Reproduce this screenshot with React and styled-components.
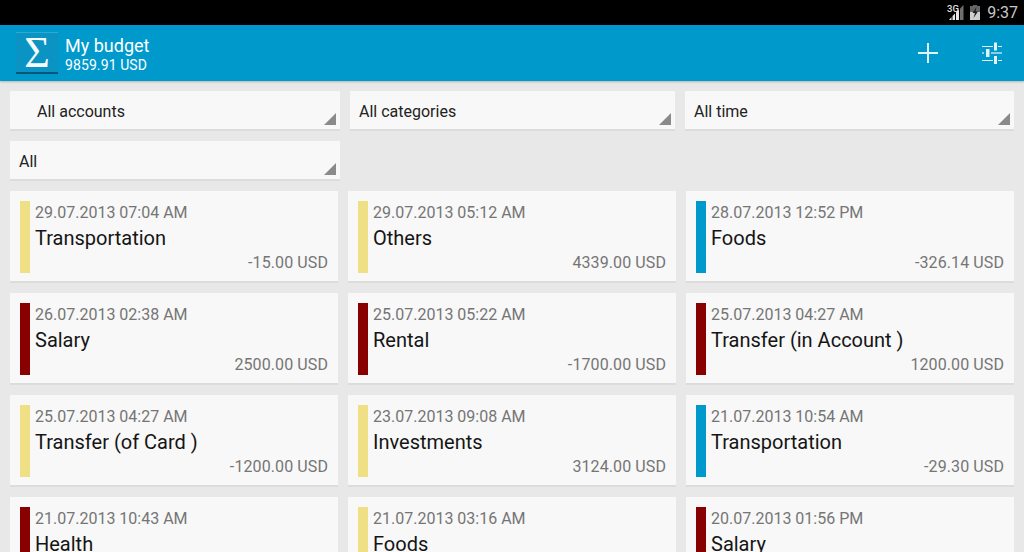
import React from "react"
import styled, { createGlobalStyle } from "styled-components"

const GlobalStyle = createGlobalStyle`
  html, body {
    margin: 0;
    padding: 0;
    background: #e8e8e8;
  }
  body {
    font-family: Roboto, "Liberation Sans", sans-serif;
  }
`

const Root = styled.div`
  width: 1024px;
  height: 552px;
  overflow: hidden;
  background: #e8e8e8;
`

const StatusBar = styled.div`
  height: 25px;
  background: #000;
  display: flex;
  align-items: center;
  justify-content: flex-end;
  padding-right: 6px;
  box-sizing: border-box;
`

const Clock = styled.span`
  color: #c8c8c8;
  font-size: 16px;
  margin-left: 7px;
  line-height: 25px;
`

const StatusIcon = styled.svg`
  display: block;
  margin-left: ${(p) => p.$gap || 0}px;
`

const Toolbar = styled.header`
  height: 56px;
  background: #0099cc;
  box-shadow: 0 1px 2px rgba(0, 0, 0, 0.22);
  display: flex;
  align-items: center;
  padding-left: 16px;
  box-sizing: border-box;
  color: #fff;
`

const Logo = styled.div`
  width: 42px;
  height: 42px;
  box-sizing: border-box;
  border-top: 1px solid #2fa9d3;
  border-bottom: 2px solid #05577a;
  background: #0b93c4;
  display: flex;
  align-items: center;
  justify-content: center;
  font-family: "Liberation Serif", serif;
  font-size: 44px;
  line-height: 36px;
  color: #f4fbfd;
`

const TitleBlock = styled.div`
  margin-left: 7px;
  padding-top: 2px;
  flex: 1;
  display: flex;
  flex-direction: column;
`

const AppTitle = styled.div`
  font-size: 18px;
  line-height: 22px;
`

const AppSubtitle = styled.div`
  font-size: 14px;
  line-height: 16px;
  letter-spacing: 0.1px;
`

const ActionButton = styled.button`
  width: 64px;
  height: 56px;
  border: 0;
  padding: 0;
  background: none;
  display: flex;
  align-items: center;
  justify-content: center;
`

const Filters = styled.div`
  display: grid;
  grid-template-columns: 330px 325px 329px;
  column-gap: 10px;
  row-gap: 10px;
  padding: 10px 10px;
`

const Spinner = styled.div`
  position: relative;
  height: 40px;
  box-sizing: border-box;
  background: #f8f8f8;
  border-bottom: 2px solid #dcdcdc;
  color: #222;
  font-size: 16px;
  line-height: 42px;
  padding-left: ${(p) => p.$indent}px;
`

const Arrow = styled.span`
  position: absolute;
  right: 4px;
  bottom: 4px;
  width: 12px;
  height: 12px;
  background: #8a8a8a;
  clip-path: polygon(100% 0, 100% 100%, 0 100%);
`

const Cards = styled.div`
  display: grid;
  grid-template-columns: repeat(3, 328px);
  column-gap: 10px;
  row-gap: 10px;
  padding: 0 10px;
`

const Card = styled.div`
  height: 92px;
  box-sizing: border-box;
  background: #f8f8f8;
  border-bottom: 2px solid #dcdcdc;
  padding: 10px 10px 8px 10px;
  display: flex;
`

const ColorBar = styled.div`
  width: 10px;
  height: 72px;
  flex: none;
  background: ${(p) => p.$color};
`

const CardBody = styled.div`
  flex: 1;
  margin-left: 5px;
  display: flex;
  flex-direction: column;
`

const CardDate = styled.div`
  font-size: 16px;
  line-height: 24px;
  color: #757575;
`

const CardTitle = styled.div`
  font-size: 20px;
  line-height: 26px;
  color: #151515;
`

const CardAmount = styled.div`
  font-size: 16px;
  line-height: 22px;
  margin-top: 1px;
  letter-spacing: 0.1px;
  text-align: right;
  color: #757575;
`

const YELLOW = "#f0e085"
const BLUE = "#0099cc"
const RED = "#880000"

const filters = [
  { label: "All accounts", indent: 27 },
  { label: "All categories", indent: 9 },
  { label: "All time", indent: 9 },
  { label: "All", indent: 9 },
]

const entries = [
  ["29.07.2013 07:04 AM", "Transportation", "-15.00 USD", YELLOW],
  ["29.07.2013 05:12 AM", "Others", "4339.00 USD", YELLOW],
  ["28.07.2013 12:52 PM", "Foods", "-326.14 USD", BLUE],
  ["26.07.2013 02:38 AM", "Salary", "2500.00 USD", RED],
  ["25.07.2013 05:22 AM", "Rental", "-1700.00 USD", RED],
  ["25.07.2013 04:27 AM", "Transfer (in Account )", "1200.00 USD", RED],
  ["25.07.2013 04:27 AM", "Transfer (of Card )", "-1200.00 USD", YELLOW],
  ["23.07.2013 09:08 AM", "Investments", "3124.00 USD", YELLOW],
  ["21.07.2013 10:54 AM", "Transportation", "-29.30 USD", BLUE],
  ["21.07.2013 10:43 AM", "Health", "-80.00 USD", RED],
  ["21.07.2013 03:16 AM", "Foods", "-54.20 USD", YELLOW],
  ["20.07.2013 01:56 PM", "Salary", "2500.00 USD", RED],
]

const SignalIcon = () => (
  <StatusIcon width="17" height="17" viewBox="0 0 17 17">
    <text x="0" y="8" fontSize="9.500" fontWeight="500" fill="#e0e0e0" fontFamily="Roboto, sans-serif">3G</text>
    <path d="M2 16h2.500v-3zM5.500 16H8v-6.500L5.500 12zM9 16h3V5.500L9 8.500z" fill="#e8e8e8" />
    <path d="M13 16h3.500V1L13 4.500z" fill="#6e6e6e" />
  </StatusIcon>
)

const BatteryIcon = () => (
  <StatusIcon $gap={6} width="10" height="15" viewBox="0 0 10 15">
    <path d="M3 0h4v1h3v14H0V1h3z" fill="#d0d0d0" />
    <path d="M0 1h10v6H0zM3 0h4v1H3z" fill="#666" />
    <path d="M6.500 2 2.500 8H5l-1.500 5L8 6.500H5.500z" fill="#1c1c1c" />
  </StatusIcon>
)

const PlusIcon = () => (
  <svg width="20" height="20" viewBox="0 0 20 20">
    <path d="M9 0h2v9h9v2h-9v9H9v-9H0V9h9z" fill="#e4f3f9" />
  </svg>
)

const SlidersIcon = () => (
  <svg width="20" height="22" viewBox="0 0 20 22" fill="#e4f3f9">
    <path d="M0 4h11v1H0zM16 4h4v1h-4zM0 18h11v1H0zM16 18h4v1h-4z" />
    <path d="M0 10h2v2H0zM9 10h11v2H9z" opacity="0.6" />
    <rect x="12" y="0.500" width="3" height="8" />
    <rect x="4" y="7" width="3.500" height="8" />
    <rect x="12" y="14" width="3" height="8" />
  </svg>
)

const App = () => (
  <Root>
    <GlobalStyle />
    <StatusBar>
      <SignalIcon />
      <BatteryIcon />
      <Clock>9:37</Clock>
    </StatusBar>
    <Toolbar>
      <Logo>Σ</Logo>
      <TitleBlock>
        <AppTitle>My budget</AppTitle>
        <AppSubtitle>9859.91 USD</AppSubtitle>
      </TitleBlock>
      <ActionButton aria-label="Add">
        <PlusIcon />
      </ActionButton>
      <ActionButton aria-label="Filter">
        <SlidersIcon />
      </ActionButton>
    </Toolbar>
    <Filters>
      {filters.map((f) => (
        <Spinner key={f.label} $indent={f.indent}>
          {f.label}
          <Arrow />
        </Spinner>
      ))}
    </Filters>
    <Cards>
      {entries.map(([date, title, amount, color]) => (
        <Card key={date + title}>
          <ColorBar $color={color} />
          <CardBody>
            <CardDate>{date}</CardDate>
            <CardTitle>{title}</CardTitle>
            <CardAmount>{amount}</CardAmount>
          </CardBody>
        </Card>
      ))}
    </Cards>
  </Root>
)

export default App
